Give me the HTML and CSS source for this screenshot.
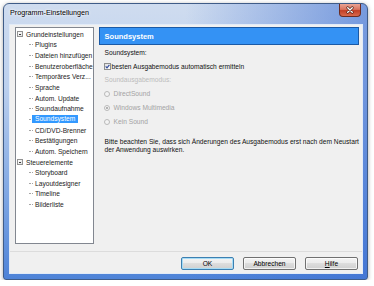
FILE: index.html
```html
<!DOCTYPE html>
<html lang="de">
<head>
    <meta charset="UTF-8">
    <meta name="viewport" content="width=device-width, initial-scale=1.0">
    <title>Programm-Einstellungen</title>
    <link rel="stylesheet" href="styles.css">
</head>
<body>
    <div class="window">
        <div class="titlebar">
            <span class="title">Programm-Einstellungen</span>
            <span class="close">
                <svg width="22" height="13" viewBox="0 0 22 13">
                    <path d="M8.5 3.5 L13.5 8.5 M13.5 3.5 L8.5 8.5" stroke="#4a1d14" stroke-width="3" stroke-linecap="round"/>
                    <path d="M8.5 3.5 L13.5 8.5 M13.5 3.5 L8.5 8.5" stroke="#fff" stroke-width="1.5" stroke-linecap="round"/>
                </svg>
            </span>
        </div>
        <div class="client">
            <div class="main">
                <ul class="tree">
                    <li class="node"><span class="toggle"></span>Grundeinstellungen</li>
                    <li class="leaf">Plugins</li>
                    <li class="leaf">Dateien hinzufügen</li>
                    <li class="leaf">Benutzeroberfläche</li>
                    <li class="leaf">Temporäres Verz...</li>
                    <li class="leaf">Sprache</li>
                    <li class="leaf">Autom. Update</li>
                    <li class="leaf">Soundaufnahme</li>
                    <li class="leaf selected"><span>Soundsystem</span></li>
                    <li class="leaf">CD/DVD-Brenner</li>
                    <li class="leaf">Bestätigungen</li>
                    <li class="leaf">Autom. Speichern</li>
                    <li class="node"><span class="toggle"></span>Steuerelemente</li>
                    <li class="leaf">Storyboard</li>
                    <li class="leaf">Layoutdesigner</li>
                    <li class="leaf">Timeline</li>
                    <li class="leaf">Bilderliste</li>
                </ul>
                <div class="panel">
                    <div class="panel-header">Soundsystem</div>
                    <div class="panel-body">
                        <p class="label">Soundsystem:</p>
                        <label class="check">
                            <span class="box">
                                <svg width="5" height="5" viewBox="0 0 5 5">
                                    <path d="M0.7 2.4 L2 3.9 L4.4 0.8" stroke="#2f4a9c" stroke-width="1.1" fill="none"/>
                                </svg>
                            </span>
                            besten Ausgabemodus automatisch ermitteln
                        </label>
                        <p class="label disabled">Soundausgabemodus:</p>
                        <label class="radio"><span class="dot"></span>DirectSound</label>
                        <label class="radio checked"><span class="dot"></span>Windows Multimedia</label>
                        <label class="radio"><span class="dot"></span>Kein Sound</label>
                        <p class="note">Bitte beachten Sie, dass sich Änderungen des Ausgabemodus erst nach dem Neustart<br>der Anwendung auswirken.</p>
                    </div>
                </div>
            </div>
            <div class="footer">
                <button class="btn default">OK</button>
                <button class="btn">Abbrechen</button>
                <button class="btn"><u>H</u>ilfe</button>
            </div>
        </div>
    </div>
</body>
</html>
```

FILE: styles.css
```css
*
{
    box-sizing: border-box;
}
body
{
    margin: 0;
    background: #fff;
    font-family: "Liberation Sans", Arial, sans-serif;
    font-size: 6.65px;
    color: #000;
}
.window
{
    margin: 3px 0 0 3px;
    width: 365px;
    height: 277px;
    padding: 0 5px 6px 6px;
    display: flex;
    flex-direction: column;
    border: 1px solid #3f5c88;
    border-radius: 6px 6px 3px 3px;
    background:
        linear-gradient(to right, rgba(80, 130, 220, 0) 50%, rgba(60, 110, 210, 0.6) 100%),
        linear-gradient(to bottom, #cfdcef 0%, #bcd0ee 30%, #7ea6e3 70%, #4e83d8 100%);
    box-shadow: 0 1px 4px rgba(0, 0, 0, 0.35);
}
.titlebar
{
    height: 21px;
    display: flex;
    justify-content: space-between;
    align-items: flex-start;
}
.title
{
    margin-top: 5px;
    font-size: 7.2px;
    line-height: 8px;
    text-shadow: 0 0 3px #fff, 0 0 3px #fff;
}
.close
{
    width: 22px;
    height: 13px;
    margin-right: 1px;
    display: flex;
    border: 1px solid #6b2c22;
    border-top: 0;
    border-radius: 0 0 4px 4px;
    background: linear-gradient(#e9a595 0%, #d9745f 45%, #c23f26 55%, #d9694c 100%);
}
.client
{
    flex: 1;
    display: flex;
    flex-direction: column;
    background: #f0f0f0;
    box-shadow: 0 0 0 1px #e2ebf7;
}
.main
{
    flex: 1;
    display: flex;
    gap: 5px;
    padding: 2px 4px 0 5px;
}
.tree
{
    width: 82px;
    height: 217px;
    margin: 0;
    padding: 1px 0 0 0;
    list-style: none;
    background: #fff;
    border: 1px solid #828790;
    color: #222;
}
.tree li
{
    height: 10.65px;
    display: flex;
    align-items: center;
    white-space: nowrap;
}
.node
{
    padding-left: 1px;
}
.toggle
{
    width: 6px;
    height: 6px;
    margin-right: 3px;
    display: flex;
    align-items: center;
    justify-content: center;
    border: 1px solid #929292;
    background: linear-gradient(135deg, #fff, #e2e2e2);
}
.toggle::after
{
    content: "";
    width: 2px;
    height: 1px;
    background: #3d3d3d;
}
.leaf
{
    padding-left: 13px;
}
.leaf::before
{
    content: "";
    width: 4px;
    margin-right: 2px;
    border-top: 1px dotted #a5a5a5;
}
.leaf.selected span
{
    margin-left: -3px;
    padding: 0 3px;
    line-height: 8px;
    background: #3399ff;
    color: #fff;
}
.panel
{
    flex: 1;
    display: flex;
    flex-direction: column;
}
.panel-header
{
    height: 18px;
    padding-left: 5px;
    display: flex;
    align-items: center;
    background: #3492f4;
    border: 1px solid #1b5aa6;
    color: #fff;
    font-size: 7.5px;
    font-weight: bold;
}
.panel-body
{
    padding-left: 6px;
    display: flex;
    flex-direction: column;
    align-items: flex-start;
    line-height: 8px;
    color: #111;
}
.panel-body p
{
    margin: 0;
}
.panel-body .label
{
    margin-top: 4.3px;
}
.panel-body .label.disabled
{
    margin-top: 5.4px;
    color: #bcbcbc;
}
.check
{
    margin: 5.4px 0 0 -1px;
    display: flex;
    align-items: center;
    gap: 1px;
}
.box
{
    width: 7px;
    height: 7px;
    display: flex;
    align-items: center;
    justify-content: center;
    border: 1px solid #8e8f8f;
    background: linear-gradient(135deg, #dedede, #fff);
}
.radio
{
    margin: 6px 0 0 -1px;
    display: flex;
    align-items: center;
    gap: 4px;
    color: #a3a3a3;
}
.dot
{
    width: 6px;
    height: 6px;
    display: flex;
    align-items: center;
    justify-content: center;
    border: 1px solid #b9b9b9;
    border-radius: 50%;
    background: #f4f4f4;
}
.radio.checked .dot::after
{
    content: "";
    width: 2px;
    height: 2px;
    border-radius: 50%;
    background: #9c9c9c;
}
.panel-body .note
{
    margin-top: 11.7px;
    white-space: nowrap;
}
.footer
{
    height: 22px;
    padding: 5px 4px 0 0;
    display: flex;
    justify-content: flex-end;
    gap: 9px;
    border-top: 1px solid #dcdcdc;
}
.btn
{
    width: 53px;
    height: 13px;
    padding: 0;
    font: inherit;
    color: #000;
    border: 1px solid #707070;
    border-radius: 2px;
    background: linear-gradient(#f3f3f3 0%, #ebebeb 50%, #dddddd 50%, #cfcfcf 100%);
    box-shadow: inset 0 0 0 1px rgba(255, 255, 255, 0.7);
}
.btn.default
{
    border-color: #3c7fb1;
    box-shadow: inset 0 0 0 1px #a6dcf6;
}
```
